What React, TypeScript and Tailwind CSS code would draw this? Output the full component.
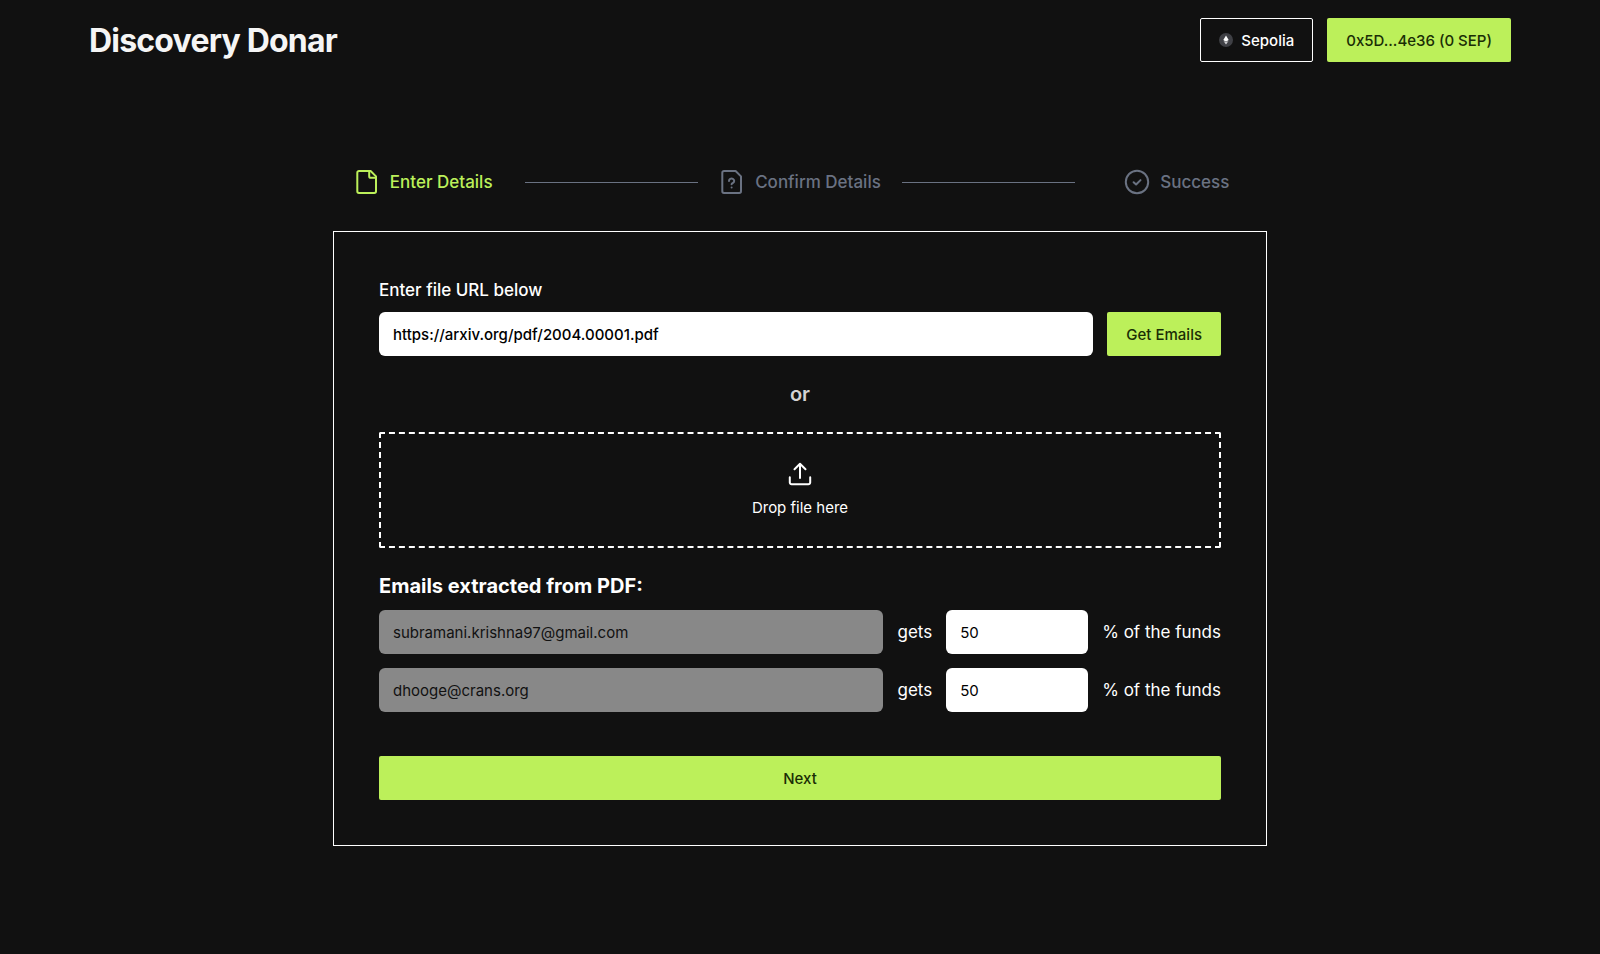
import { useState, type ReactNode } from "react";

type Recipient = { email: string; share: string };

const INITIAL_RECIPIENTS: Recipient[] = [
  { email: "subramani.krishna97@gmail.com", share: "50" },
  { email: "dhooge@crans.org",              share: "50" },
];

const LIME_BUTTON =
  "h-11 shrink-0 rounded-xs bg-[#bcf05a] px-[19px] pt-0.5 text-[15px] font-medium text-[#1a2e05] hover:bg-[#aee04c]";

function EthereumIcon() {
  return (
    <svg viewBox="0 0 14 14" className="size-3.5" aria-hidden="true">
      <circle cx="7" cy="7" r="7" fill="#3f4045" />
      <path d="M7 2.6 9.7 7.1 7 8.7 4.3 7.1Z" fill="#fff" />
      <path d="M7 11.4 4.5 7.9 7 9.3 9.5 7.9Z" fill="#d4d4d8" />
    </svg>
  );
}

function StepIcon({ children }: { children: ReactNode }) {
  return (
    <svg
      viewBox="0 0 26 26"
      className="size-[26px] shrink-0"
      fill="none"
      stroke="currentColor"
      strokeWidth="2"
      strokeLinecap="round"
      strokeLinejoin="round"
      aria-hidden="true"
    >
      {children}
    </svg>
  );
}

function FileIcon() {
  return (
    <StepIcon>
      <path d="M5 2H16.6L22 7.4V22.3a1.7 1.7 0 0 1-1.7 1.7H5a1.7 1.7 0 0 1-1.7-1.7V3.7A1.7 1.7 0 0 1 5 2Z" />
      <path d="M15.2 2.5V7.2a1.6 1.6 0 0 0 1.6 1.6H21.6" />
    </StepIcon>
  );
}

function FileQuestionIcon() {
  return (
    <StepIcon>
      <path d="M5 2H16.6L22 7.4V22.3a1.7 1.7 0 0 1-1.7 1.7H5a1.7 1.7 0 0 1-1.7-1.7V3.7A1.7 1.7 0 0 1 5 2Z" />
      <path d="M10 11.9a2.6 2.3 0 1 1 4 1.9c-.9.5-1.4.8-1.4 1.4" />
      <path d="M12.6 18.5v.1" />
    </StepIcon>
  );
}

function CheckCircleIcon() {
  return (
    <StepIcon>
      <circle cx="13" cy="13" r="11.2" />
      <path d="m9.6 13.2 2.5 2.3 4.4-4.4" />
    </StepIcon>
  );
}

function UploadIcon() {
  return (
    <svg
      viewBox="0 0 26 26"
      className="size-[26px]"
      fill="none"
      stroke="currentColor"
      strokeWidth="2"
      strokeLinecap="round"
      strokeLinejoin="round"
      aria-hidden="true"
    >
      <path d="M2.8 16.2v5.2A1.8 1.8 0 0 0 4.6 23.2H21.4a1.8 1.8 0 0 0 1.8-1.8V16.2" />
      <path d="M13 17V3M7.5 8.2 13 2.8l5.5 5.4" />
    </svg>
  );
}

function Step({ icon, label, active }: { icon: ReactNode; label: string; active?: boolean }) {
  return (
    <li
      aria-current={active ? "step" : undefined}
      className={`flex items-center justify-center gap-2.5 text-[17px] font-medium whitespace-nowrap ${
        active ? "text-[#bcf05a]" : "text-gray-500"
      }`}
    >
      {icon}
      <span className="pt-0.5">{label}</span>
    </li>
  );
}

export default function App() {
  const [url, setUrl] = useState("https://arxiv.org/pdf/2004.00001.pdf");
  const [recipients, setRecipients] = useState(INITIAL_RECIPIENTS);

  function setShare(index: number, share: string) {
    setRecipients((rows) => rows.map((row, i) => (i === index ? { ...row, share } : row)));
  }

  return (
    <div className="min-h-screen bg-[#111111] font-['Inter',sans-serif] text-white">
      <header className="flex items-center justify-between px-[89px] py-[18px]">
        <h1 className="pt-0.5 text-[32px] leading-10 font-bold tracking-tight text-neutral-100">Discovery Donar</h1>
        <div className="flex gap-3.5">
          <button
            type="button"
            className="flex h-11 items-center gap-2 rounded-xs border border-white px-[18px] text-[15px] font-medium"
          >
            <EthereumIcon />
            <span className="pt-0.5">Sepolia</span>
          </button>
          <button type="button" className={LIME_BUTTON}>0x5D...4e36 (0 SEP)</button>
        </div>
      </header>

      <main className="mx-auto max-w-[934px] pt-[88px]">
        <ol className="-mx-1 grid h-[63px] grid-cols-5 items-start">
          <Step icon={<FileIcon />} label="Enter Details" active />
          <li aria-hidden="true" className="mx-2 mt-3.5 h-px bg-gray-500" />
          <Step icon={<FileQuestionIcon />} label="Confirm Details" />
          <li aria-hidden="true" className="mx-2 mt-3.5 h-px bg-gray-500" />
          <Step icon={<CheckCircleIcon />} label="Success" />
        </ol>

        <form className="border border-white p-[45px] pt-11" onSubmit={(e) => e.preventDefault()}>
          <label htmlFor="file-url" className="block pb-2 text-[17px] leading-7 font-medium">
            Enter file URL below
          </label>
          <div className="flex gap-3.5">
            <input
              id="file-url"
              type="text"
              value={url}
              onChange={(e) => setUrl(e.target.value)}
              className="h-11 min-w-0 flex-1 rounded-md bg-white px-3.5 text-[15px] font-medium text-black"
            />
            <button type="button" className={LIME_BUTTON}>Get Emails</button>
          </div>

          <p className="py-6 text-center text-[20px] leading-7 font-semibold text-neutral-300">or</p>

          <button
            type="button"
            className="flex h-[116px] w-full flex-col items-center justify-center gap-2.5 rounded-xs border-2 border-dashed border-white text-[15px]"
          >
            <UploadIcon />
            Drop file here
          </button>

          <h2 className="pt-6 pb-2.5 text-[20px] leading-7 font-bold">Emails extracted from PDF:</h2>
          <div className="flex flex-col gap-3.5">
            {recipients.map(({ email, share }, i) => (
              <div key={email} className="flex items-center gap-3.5 text-[17px]">
                <input
                  type="email"
                  aria-label="Email"
                  value={email}
                  disabled
                  className="h-11 min-w-0 flex-1 rounded-md bg-[#888888] px-3.5 text-[15px] text-[#111111]"
                />
                <label htmlFor={`share-${i}`} className="pt-0.5">gets</label>
                <input
                  id={`share-${i}`}
                  type="text"
                  inputMode="numeric"
                  value={share}
                  onChange={(e) => setShare(i, e.target.value)}
                  className="h-11 w-[142px] rounded-md bg-white px-3.5 text-[15px] text-black"
                />
                <span className="pt-0.5">% of the funds</span>
              </div>
            ))}
          </div>

          <button type="submit" className={`${LIME_BUTTON} mt-11 w-full`}>Next</button>
        </form>
      </main>
    </div>
  );
}
